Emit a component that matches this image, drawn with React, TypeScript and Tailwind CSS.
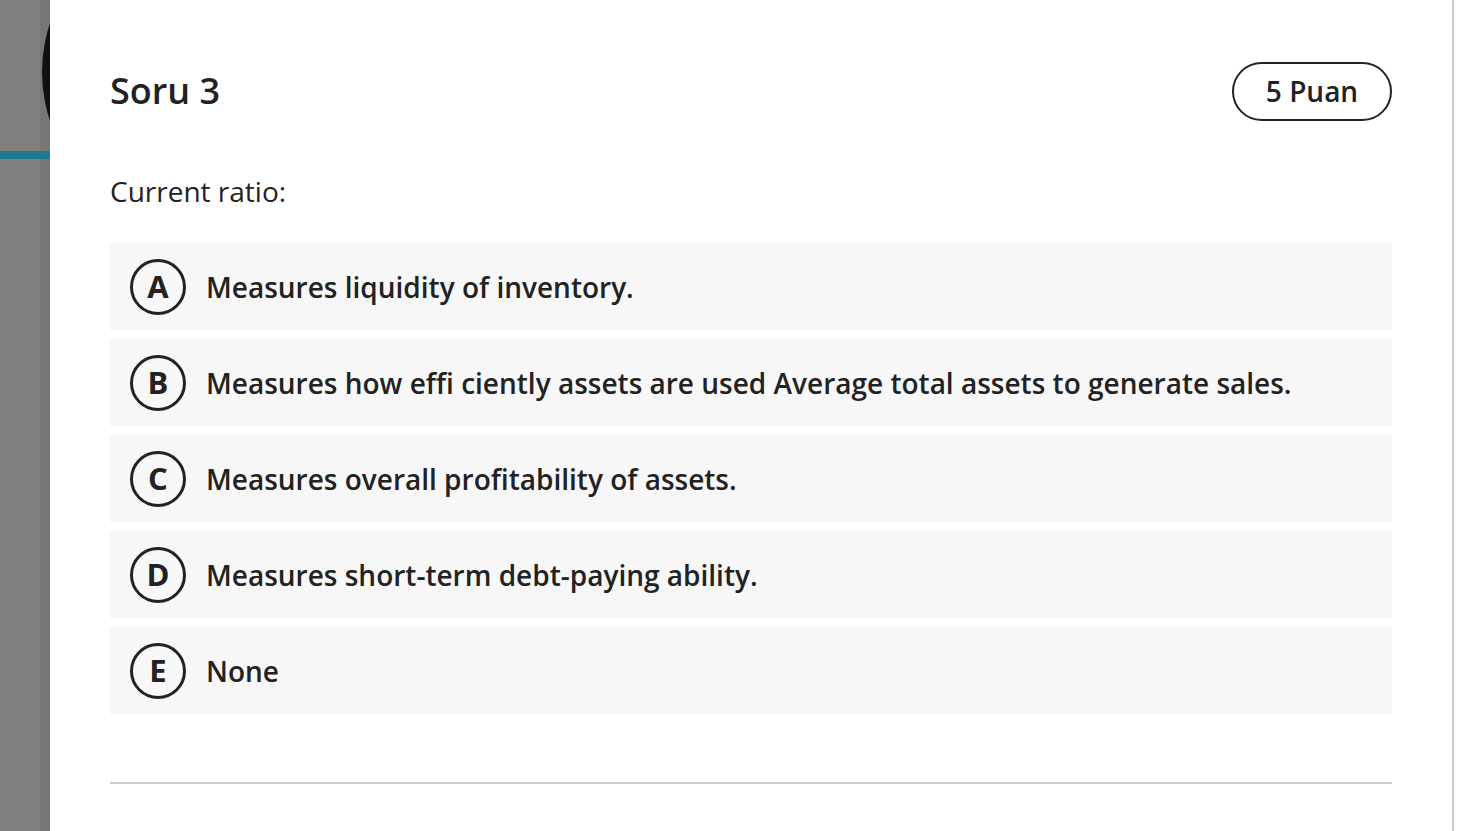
const options = [
  { letter: "A", text: "Measures liquidity of inventory." },
  { letter: "B", text: "Measures how effi ciently assets are used Average total assets to generate sales." },
  { letter: "C", text: "Measures overall profitability of assets." },
  { letter: "D", text: "Measures short-term debt-paying ability." },
  { letter: "E", text: "None" },
]

export default function App() {
  return (
    <div className="flex h-[831px] w-[1473px] overflow-hidden bg-white text-[#222] font-['Open_Sans',sans-serif]">
      <Sidebar />
      <div className="flex w-[1404px] shrink-0 flex-col border-r-2 border-[#cbcbcb] px-[60px] pt-[62px]">
        <Header />
        <p className="mt-[52px] text-[28px] leading-[39px]">Current ratio:</p>
        <div className="mt-[32px] flex flex-col gap-[9px]">
          {options.map((o) => (
            <Option key={o.letter} letter={o.letter} text={o.text} />
          ))}
        </div>
        <div className="mt-[68px] h-[2px] bg-[#cccccc]" />
      </div>
    </div>
  )
}

function Sidebar() {
  return (
    <div className="relative flex h-full w-[50px] shrink-0 overflow-hidden bg-[#808080]">
      <div className="absolute right-0 top-0 h-full w-[10px] bg-[#777777]" />
      <div className="absolute left-[42px] top-[-82px] h-[308px] w-[308px] rounded-full bg-[#111111]" />
      <div className="absolute left-0 top-[151px] h-[8px] w-[50px] bg-[#1c7a8e]" />
    </div>
  )
}

function Header() {
  return (
    <div className="flex h-[58px] items-center justify-between">
      <h2 className="text-[36px] font-semibold leading-none">Soru 3</h2>
      <div className="flex h-[59px] w-[160px] items-center justify-center rounded-full border-2 border-[#222]">
        <span className="text-[28px] font-semibold">5 Puan</span>
      </div>
    </div>
  )
}

function Option({ letter, text }: { letter: string; text: string }) {
  return (
    <div className="flex h-[87px] shrink-0 items-center gap-[20px] bg-[#f7f7f7] pl-[20px]">
      <div className="flex h-[56px] w-[56px] items-center justify-center rounded-full border-[3px] border-[#222]">
        <span className="text-[31px] font-bold leading-none">{letter}</span>
      </div>
      <span className="text-[28px] font-semibold">{text}</span>
    </div>
  )
}
